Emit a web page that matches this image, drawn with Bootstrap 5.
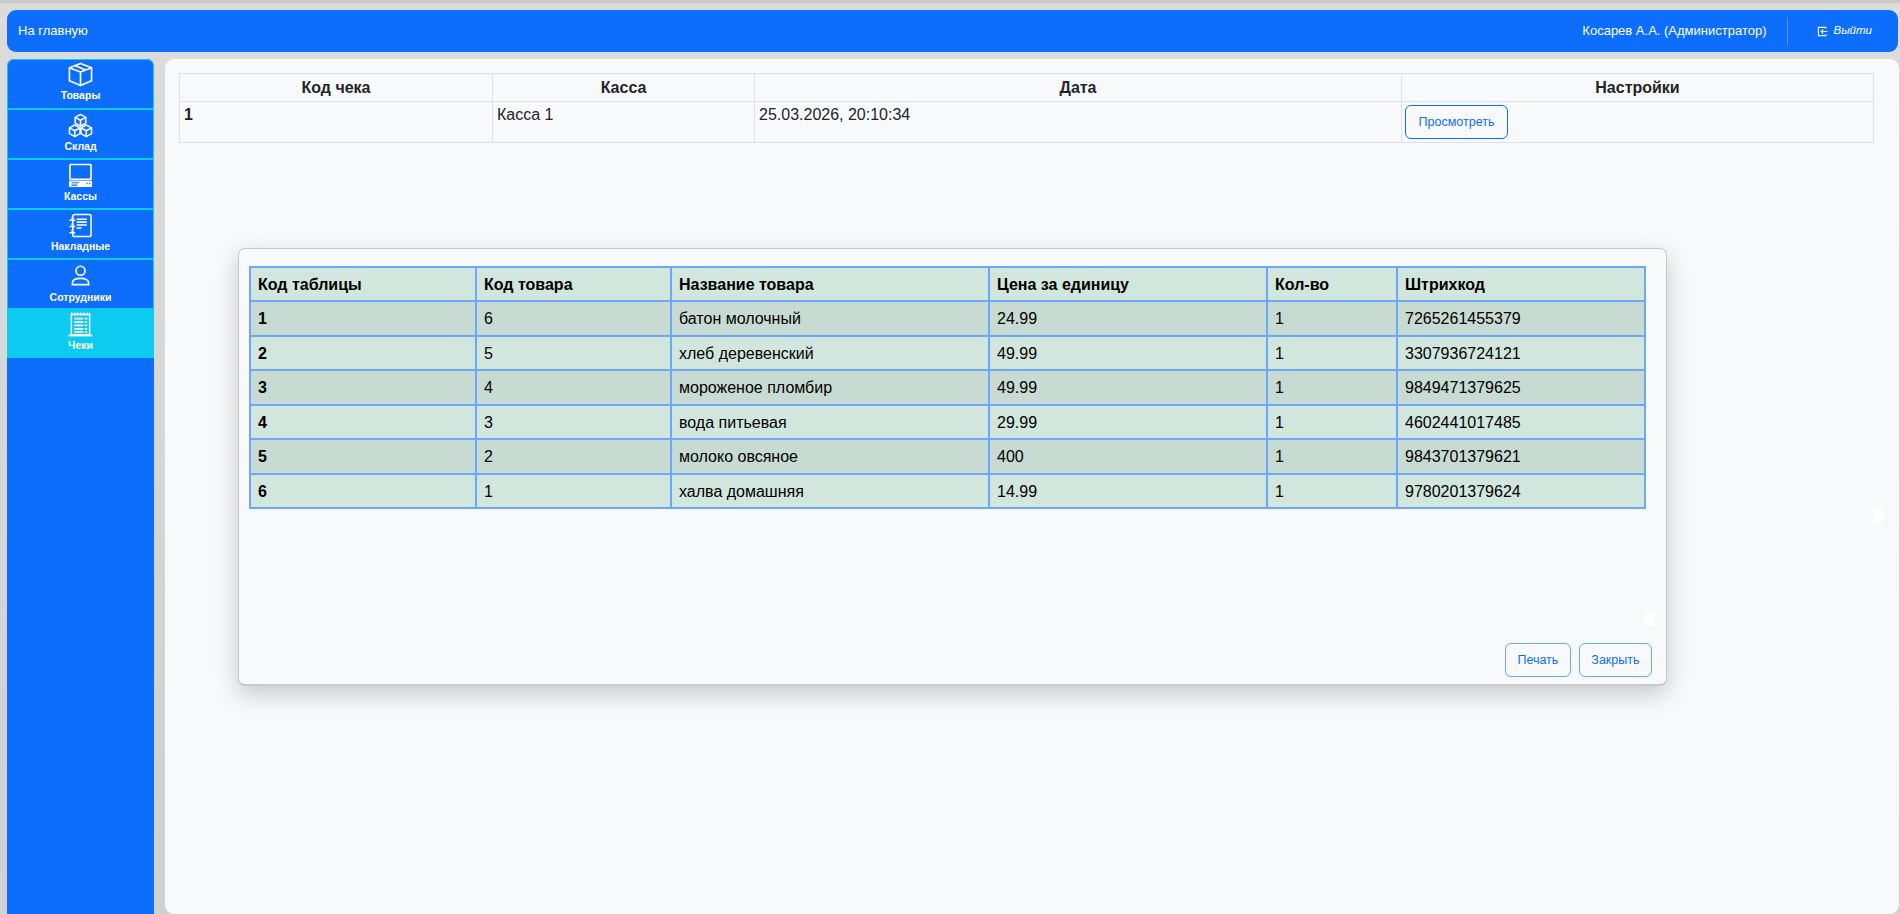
<!DOCTYPE html>
<html lang="ru">
<head>
<meta charset="utf-8">
<title>Чеки</title>
<link href="https://cdn.jsdelivr.net/npm/bootstrap@5.3.0/dist/css/bootstrap.min.css" rel="stylesheet">
<style>
html,body{height:914px;overflow:hidden}
body{background:linear-gradient(#dcdcdc,#d0d0d0);font-family:"Liberation Sans",Arial,sans-serif;color:#212529;border-top:3px solid #c8c8c8;padding:7px 2px 0 7px}
.top-bar{height:42px;border-radius:9px;background:#0d6efd;color:#fff;font-size:13px;padding:0 11px}
.top-bar a{color:#fff;text-decoration:none}
.user-cell{height:28px;border-right:1px solid rgba(255,255,255,.3);padding-right:21px;margin-right:29px;display:flex;align-items:center}
.exit-link{font-style:italic;font-size:11.5px;font-weight:500;margin-right:15px;display:flex;align-items:center;gap:5px}
.shell{margin-top:7px;height:855px;gap:11px}
.side-rail{width:147px;flex:none;background:#0d6efd;border-radius:7px 7px 0 0;overflow:hidden}
.rail-item{height:50px;border:1px solid #0dcaf0;border-bottom-width:2px;border-top:0;color:#fff;font-size:10.5px;font-weight:700;text-decoration:none;display:flex;flex-direction:column;align-items:center;padding-top:3px;line-height:14px}
.rail-item:first-child{height:51px;border-top:1px solid #0dcaf0;border-radius:7px 7px 0 0;padding-top:2px}
.rail-item svg{display:block;margin-bottom:1px;width:25px;height:25px}
.rail-item.plain{border-bottom:0;height:48px;padding-top:4px}
.rail-item.now{background:#0dcaf0;border:0;padding-top:4px}
.main-sheet{flex:1;background:#f8f9fa;border-radius:9px;padding:14px 25px 14px 14px;position:relative}
.check-table{width:1694px;table-layout:fixed;border-collapse:collapse;margin:0;font-size:16px;--bs-table-bg:transparent}
.check-table td,.check-table th{border:1px solid #dee2e6;padding:0 4px;vertical-align:top;background:transparent}
.check-table th{height:28px;text-align:center;line-height:27px}
.check-table td{height:41px;line-height:25px}
.btn-thin{--bs-btn-font-size:12.5px;--bs-btn-padding-y:0;--bs-btn-padding-x:11px;height:34px;line-height:30px;border-radius:6px}
.check-table .btn-thin{margin-top:3px;margin-left:-1px;width:103px;padding:0;display:block;color:#0d6efd}
.slip-box{position:absolute;left:73px;top:189px;width:1429px;height:438px;background:#f8f9fa;border:1px solid #c8c9ca;border-bottom-width:2px;border-radius:7px;box-shadow:0 8px 24px rgba(0,0,0,.2);padding:17px 10px}
.slip-table{width:1395px;table-layout:fixed;border-collapse:collapse;margin:0;font-size:16px;color:#000;--bs-table-color:#000;--bs-table-bg:#d1e7dd;--bs-table-striped-bg:#c7dbd2;--bs-table-striped-color:#000}
.slip-table td,.slip-table th{border:2px solid #6ea6fa;padding:1px 7px 0;height:34px;vertical-align:middle;color:#000}
.slip-table tbody tr:nth-child(odd) td{height:35px}
.slip-actions{position:absolute;right:14px;bottom:7px;gap:8px}
.slip-actions .btn{height:34px;padding:0 11.5px;border-radius:6px;font-size:12.5px;line-height:30px;border-width:1.5px;border-color:#6ea6fa}
.ghost-chip{position:absolute;width:10px;height:15px;background:#fff}
</style>
</head>
<body>
<header class="top-bar d-flex align-items-center justify-content-between">
  <a href="#">На главную</a>
  <div class="d-flex align-items-center">
    <div class="user-cell">Косарев А.А. (Администратор)</div>
    <a href="#" class="exit-link">
      <svg width="11" height="11" viewBox="0 0 16 16" fill="none" stroke="#fff" stroke-width="1.5"><path d="M13 4V2H2v12h11v-2"/><path d="M15 8H6M9 5 6 8l3 3"/></svg>
      Выйти
    </a>
  </div>
</header>
<div class="shell d-flex">
  <nav class="side-rail">
    <a href="#" class="rail-item">
      <svg viewBox="0 0 26 26" fill="none" stroke="#fff" stroke-width="1.7" stroke-linejoin="round"><path d="M13 1.500 24.500 6V19.500L13 24.500 1.500 19.500V6z"/><path d="M1.500 6 13 10.500 24.500 6M13 10.500v14M7.500 3.800 18.500 8.300"/></svg>
      Товары
    </a>
    <a href="#" class="rail-item">
      <svg viewBox="0 0 26 26" fill="none" stroke="#fff" stroke-width="1.600" stroke-linejoin="round"><path d="M13 1.500 18.500 4.500V10.500L13 13.500 7.500 10.500V4.500z"/><path d="M7.500 4.500 13 7.500 18.500 4.500M13 7.500v6"/><path d="M7 12.500 12.500 15.500V21.500L7 24.500 1.500 21.500V15.500z"/><path d="M1.500 15.500 7 18.500 12.500 15.500M7 18.500v6"/><path d="M19 12.500 24.500 15.500V21.500L19 24.500 13.500 21.500V15.500z"/><path d="M13.500 15.500 19 18.500 24.500 15.500M19 18.500v6"/></svg>
      Склад
    </a>
    <a href="#" class="rail-item">
      <svg viewBox="0 0 26 26" fill="none" stroke="#fff" stroke-width="1.700"><rect x="2" y="1.500" width="22" height="15.500" rx="1"/><path d="M1 18.500h24V25H1z" fill="#fff" stroke="none"/><path d="M3.500 20.500h8M3.500 23h6M20 20.500v1.500M22.500 20.500v1.500" stroke="#0d6efd" stroke-width="1.200"/></svg>
      Кассы
    </a>
    <a href="#" class="rail-item">
      <svg viewBox="0 0 26 26" fill="none" stroke="#fff" stroke-width="1.600"><rect x="5" y="1.500" width="19" height="23" rx="2"/><path d="M9 6.500h10.500M9 9.500h10.500M9 12.500h10.500M9 15.500h5" stroke-width="1.600"/><path d="M1.500 7.500h6M1.500 14h6M1.500 20.500h6" stroke-width="1.500"/><path d="M4.500 4.500v2M4.500 11v2M4.500 17.500v2" stroke-width="2"/></svg>
      Накладные
    </a>
    <a href="#" class="rail-item plain">
      <svg viewBox="0 0 26 26" fill="none" stroke="#fff" stroke-width="1.700"><circle cx="13" cy="7" r="4.700"/><path d="M4.500 21.500v-1.500c0-3 3-5 8.500-5s8.500 2 8.500 5v1.500z"/></svg>
      Сотрудники
    </a>
    <a href="#" class="rail-item now">
      <svg viewBox="0 0 26 26" fill="none" stroke="#fff" stroke-width="1.500"><path d="M3.500 2.500h19v21h-19z"/><path d="M3 2h20" stroke-width="2.500" stroke-dasharray="2 1.200"/><path d="M.5 24.500h25" stroke-width="1.700"/><path d="M6.500 7h9.500M6.500 10.500h9.500M6.500 14h9.500M6.500 17.500h9.500M6.500 21h9.500M17.500 7h2.500M17.500 10.500h2.500M17.500 14h2.500M17.500 17.500h2.500M17.500 21h2.500" stroke-width="1.800"/></svg>
      Чеки
    </a>
  </nav>
  <main class="main-sheet">
    <table class="table check-table">
      <colgroup><col style="width:313px"><col style="width:262px"><col style="width:647px"><col style="width:472px"></colgroup>
      <thead><tr><th>Код чека</th><th>Касса</th><th>Дата</th><th>Настройки</th></tr></thead>
      <tbody><tr><td class="fw-bold">1</td><td>Касса 1</td><td>25.03.2026, 20:10:34</td><td><button type="button" class="btn btn-outline-primary btn-thin">Просмотреть</button></td></tr></tbody>
    </table>
    <span class="ghost-chip" style="left:1708px;top:449px"></span>
    <section class="slip-box">
      <table class="table table-striped slip-table">
        <colgroup><col style="width:226px"><col style="width:195px"><col style="width:318px"><col style="width:278px"><col style="width:130px"><col style="width:248px"></colgroup>
        <thead><tr><th>Код таблицы</th><th>Код товара</th><th>Название товара</th><th>Цена за единицу</th><th>Кол-во</th><th>Штрихкод</th></tr></thead>
        <tbody>
          <tr><td class="fw-bold">1</td><td>6</td><td>батон молочный</td><td>24.99</td><td>1</td><td>7265261455379</td></tr>
          <tr><td class="fw-bold">2</td><td>5</td><td>хлеб деревенский</td><td>49.99</td><td>1</td><td>3307936724121</td></tr>
          <tr><td class="fw-bold">3</td><td>4</td><td>мороженое пломбир</td><td>49.99</td><td>1</td><td>9849471379625</td></tr>
          <tr><td class="fw-bold">4</td><td>3</td><td>вода питьевая</td><td>29.99</td><td>1</td><td>4602441017485</td></tr>
          <tr><td class="fw-bold">5</td><td>2</td><td>молоко овсяное</td><td>400</td><td>1</td><td>9843701379621</td></tr>
          <tr><td class="fw-bold">6</td><td>1</td><td>халва домашняя</td><td>14.99</td><td>1</td><td>9780201379624</td></tr>
        </tbody>
      </table>
      <span class="ghost-chip" style="left:1406px;top:362px"></span>
      <div class="slip-actions d-flex">
        <button type="button" class="btn btn-outline-primary">Печать</button>
        <button type="button" class="btn btn-outline-primary">Закрыть</button>
      </div>
    </section>
  </main>
</div>
</body>
</html>
